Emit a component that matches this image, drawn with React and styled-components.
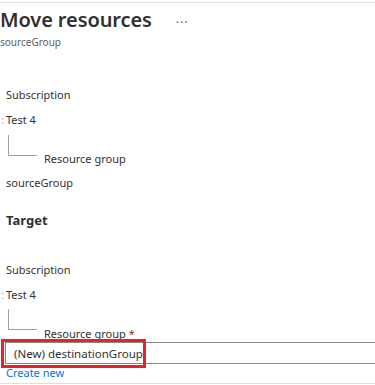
import React from 'react'
import styled, { createGlobalStyle } from 'styled-components'

const GlobalStyle = createGlobalStyle`
  html, body {
    margin: 0;
    padding: 0;
    background: #fff;
  }
  body {
    font-family: 'Noto Sans', 'Open Sans', sans-serif;
    color: #323130;
    overflow: hidden;
  }
`

const Page = styled.div`
  width: 375px;
  height: 385px;
  padding-top: 2px;
  box-sizing: border-box;
  overflow: hidden;
`

const Header = styled.header`
  border-top: 1px solid #e1dfdd;
`

const TitleRow = styled.div`
  display: flex;
  align-items: center;
  height: 32px;
`

const Title = styled.h1`
  margin: 0;
  font-size: 20px;
  font-weight: 600;
  line-height: 33px;
  letter-spacing: -0.1px;
  white-space: nowrap;
`

const More = styled.span`
  margin-left: 24px;
  font-size: 12px;
  line-height: 1;
  color: #605e5c;
  letter-spacing: 1px;
`

const Subtitle = styled.div`
  font-size: 10px;
  line-height: 14px;
  color: #605e5c;
`

const Form = styled.section`
  padding-left: 6px;
  display: flex;
  flex-direction: column;
`

const Label = styled.div`
  margin-top: ${(p) => p.$top || 0}px;
  font-size: 11px;
  line-height: 16px;
  color: #323130;
  white-space: nowrap;
`

const Required = styled.span`
  color: #a4262c;
  margin-left: 3px;
`

const Value = styled.div`
  margin-top: ${(p) => p.$top || 0}px;
  margin-left: ${(p) => (p.$colon ? -5 : 0)}px;
  font-size: 11px;
  line-height: 16px;
  color: #323130;
  white-space: nowrap;
`

const Colon = styled.span`
  color: #8fa3bd;
  margin-right: 2px;
`

const Heading = styled.h2`
  margin: ${(p) => p.$top || 0}px 0 0;
  font-size: 13px;
  font-weight: 700;
  line-height: 20px;
`

const TreeRow = styled.div`
  display: flex;
  align-items: flex-start;
  margin-top: ${(p) => p.$top || 0}px;
`

const Elbow = styled.div`
  margin-left: 2px;
  width: 28px;
  height: 20px;
  border-left: 1px solid #a19f9d;
  border-bottom: 1px solid #a19f9d;
  flex-shrink: 0;
`

const TreeLabel = styled(Label)`
  margin-top: ${(p) => p.$drop || 16}px;
  margin-left: 7px;
`

const InputWrap = styled.div`
  position: relative;
  margin-top: ${(p) => p.$top || 0}px;
  margin-left: -1px;
  margin-right: -10px;
`

const Input = styled.div`
  height: 22px;
  box-sizing: border-box;
  border: 1px solid #8a8886;
  padding: 1px 0 0 8px;
  font-size: 11.5px;
  line-height: 19px;
  color: #323130;
  white-space: nowrap;
`

const Highlight = styled.div`
  position: absolute;
  left: -4px;
  top: -3px;
  width: 145px;
  height: 29px;
  box-sizing: border-box;
  border: 3px solid #e3242b;
  pointer-events: none;
`

const Link = styled.a`
  margin-top: 1px;
  font-size: 11px;
  line-height: 16px;
  color: #0078d4;
  text-decoration: none;
`

const Footer = styled.div`
  margin-top: 2px;
  border-top: 1px solid #e1dfdd;
`

export default function App() {
  return (
    <>
      <GlobalStyle />
      <Page>
        <Header>
          <TitleRow>
            <Title>Move resources</Title>
            <More>...</More>
          </TitleRow>
          <Subtitle>sourceGroup</Subtitle>
        </Header>
        <Form>
          <Label $top={38}>Subscription</Label>
          <Value $top={9} $colon>
            <Colon>:</Colon>Test 4
          </Value>
          <TreeRow $top={7}>
            <Elbow />
            <TreeLabel>Resource group</TreeLabel>
          </TreeRow>
          <Value $top={8}>sourceGroup</Value>
          <Heading $top={19}>Target</Heading>
          <Label $top={32}>Subscription</Label>
          <Value $top={9} $colon>
            <Colon>:</Colon>Test 4
          </Value>
          <TreeRow $top={6}>
            <Elbow />
            <TreeLabel $drop={17}>
              Resource group<Required>*</Required>
            </TreeLabel>
          </TreeRow>
          <InputWrap $top={0}>
            <Input>(New) destinationGroup</Input>
            <Highlight />
          </InputWrap>
          <Link href="#">Create new</Link>
        </Form>
        <Footer />
      </Page>
    </>
  )
}
